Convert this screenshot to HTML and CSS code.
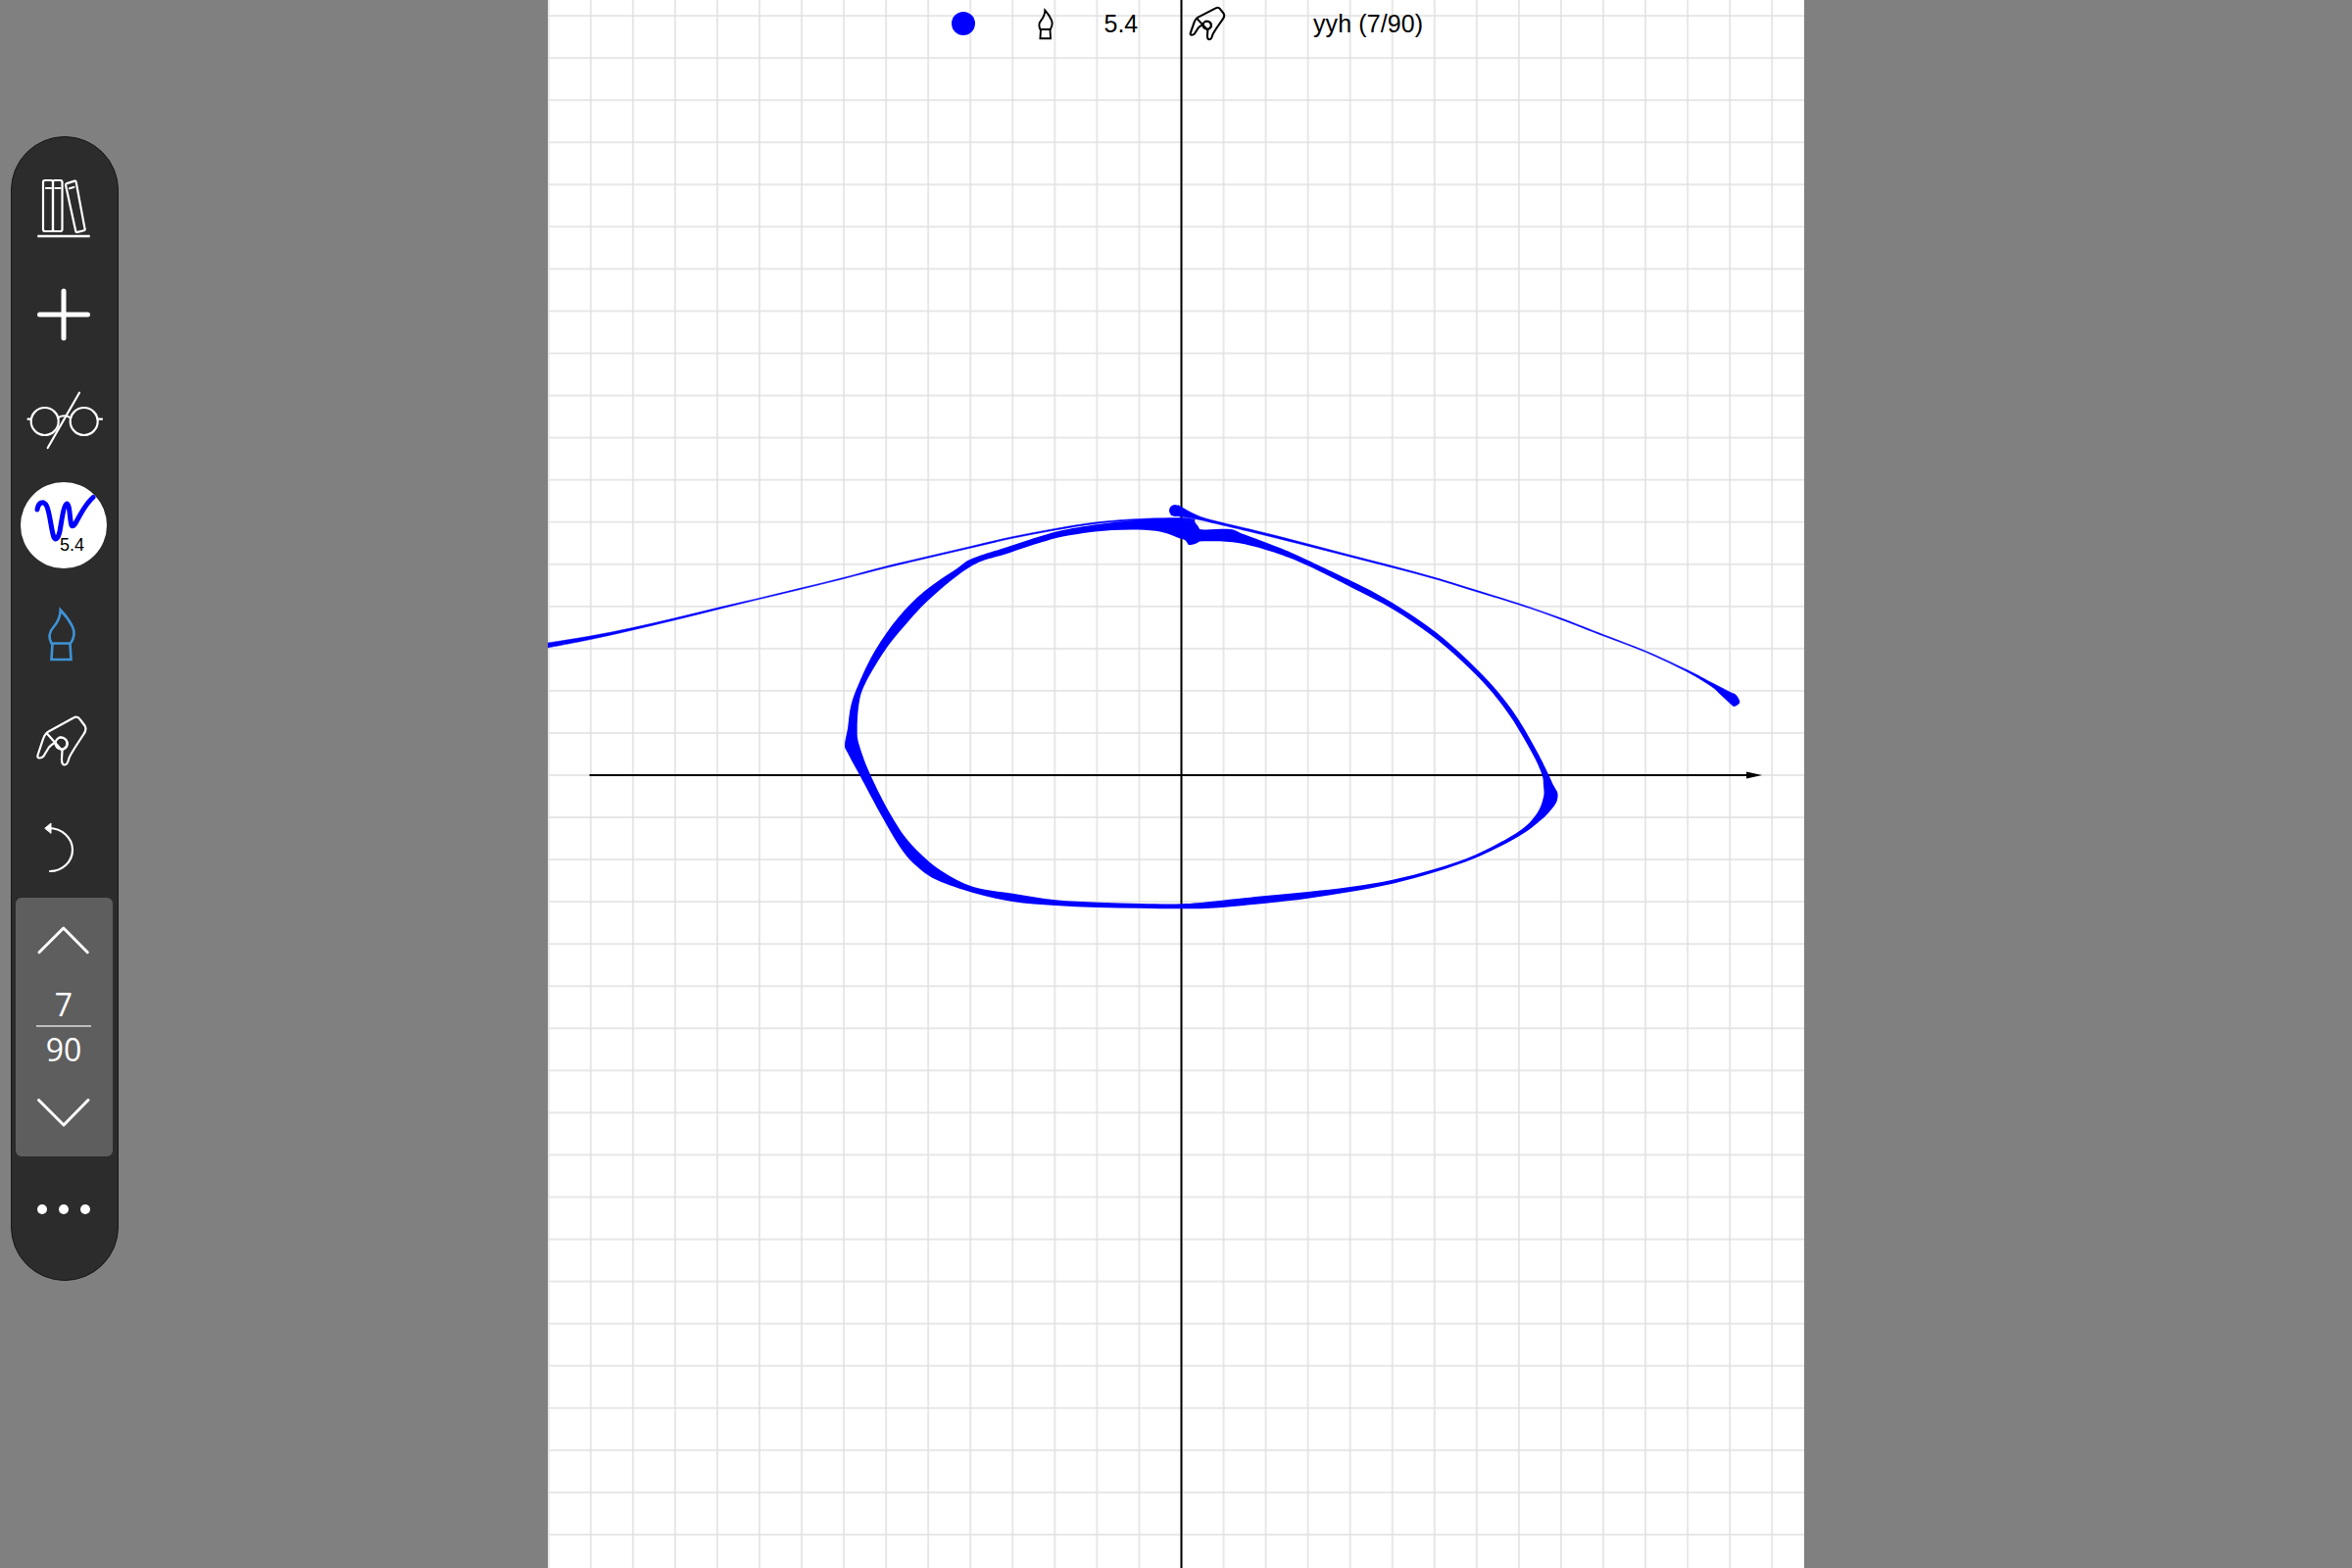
FILE: index.html
```html
<!DOCTYPE html>
<html lang="en">
  <head>
    <meta charset="UTF-8" />
    <title>yyh (7/90)</title>
    <link rel="stylesheet" href="styles.css">
  </head>
  <body>
    <svg class="defs" width="0" height="0">
      <symbol id="icon-nib" viewBox="46 618 34 58" preserveAspectRatio="none">
        <path d="M61.7 622.5C61.5 630 59 635 54.5 640C50 645 49 650 52.5 656.5H72C76.5 650 76.5 645 74 639.5C71.5 634.5 67 628 61.7 622.5Z" />
        <path d="M53.5 657L52.5 673H72.5L71.5 657" />
      </symbol>
      <symbol id="icon-hand" viewBox="36 729 54 54" preserveAspectRatio="none">
        <path d="M47.5 748C46 749.5 45 751 44 754L39 769C38 772 38 773.5 40 773.5C42 773.5 43 773.5 44.5 771.5L50 762.5C51.5 760.5 53 759.5 56.5 757.5M60 752.8C62 752 66 752.5 68 756C69.5 759 68.5 763 65 764.5M63.5 766L63 774C62.8 778.5 64 780.5 66 780.5C68.5 780.5 69.5 777.5 70.5 773.5C71.5 770.5 74 767 77 762L85.5 749C88 745.5 88 743 86.5 740.5L82 734.5C80 731.5 77.5 731 75 732.5L49.5 746.5C48.5 747 48 747.5 47.5 748Z" />
        <circle cx="62.5" cy="758.5" r="6" />
      </symbol>
    </svg>

    <aside class="toolbar">
      <div class="tool">
        <svg class="icon" viewBox="15 162 100 100">
          <rect x="44" y="184" width="10" height="52" rx="2" />
          <rect x="54" y="184" width="9.5" height="52" rx="2" />
          <path d="M47 192H52M56.5 192H61.5" />
          <path d="M67.7 187.4L76.2 184.6C76.9 184.4 77.5 184.8 77.6 185.5L86.6 233.6C86.8 234.4 86.3 235.1 85.6 235.3L79 236.9C78.2 237.1 77.5 236.7 77.3 235.9L67 188.7C66.9 188.1 67.2 187.6 67.7 187.4Z" />
          <path d="M71 192.3L75.3 191" />
          <path class="shelf" d="M38.3 241H91.7" />
        </svg>
      </div>
      <div class="tool">
        <svg class="icon" viewBox="15 270 100 100">
          <path class="plus" d="M40.5 321H89.5M65 297V345" />
        </svg>
      </div>
      <div class="tool">
        <svg class="icon" viewBox="15 378 100 100">
          <circle cx="45.7" cy="430" r="14" />
          <circle cx="85.7" cy="430" r="14" />
          <path d="M28.5 427.7H32M99.5 427.7H104M59 426.5C62 423.5 69 423.5 72 426.5M81 400.7L48.7 457" />
        </svg>
      </div>
      <div class="tool">
        <div class="pen-badge">
          <svg viewBox="21 493 88 88">
            <path class="squiggle" d="M38 521C39 514 44 511 47.5 517C51 524 52 541 55 549.5C57 553 59.5 550 61 543C63 532 65 516 68 515C71.5 514.5 71 532 73 537C75 540 78 533 82 526C86 519 90 513 95 508.5" />
          </svg>
          <span class="pen-size">5.4</span>
        </div>
      </div>
      <div class="tool">
        <svg class="icon icon-blue" viewBox="15 594 100 100">
          <path d="M61.7 622.5C61.5 630 59 635 54.5 640C50 645 49 650 52.5 656.5H72C76.5 650 76.5 645 74 639.5C71.5 634.5 67 628 61.7 622.5Z" />
          <path d="M53.5 657L52.5 673H72.5L71.5 657" />
        </svg>
      </div>
      <div class="tool">
        <svg class="icon" viewBox="15 702 100 100">
          <use href="#icon-hand" x="36" y="729" width="54" height="54" />
        </svg>
      </div>
      <div class="tool">
        <svg class="icon" viewBox="15 810 100 100">
          <path d="M51 889C64 889 74 879 74 867C74 855 63 845 50 845" />
          <path class="arrowhead" d="M46 845L52 840V850Z" />
        </svg>
      </div>

      <div class="pager">
        <svg class="chevron" viewBox="15 940 100 40">
          <path d="M40 971.7L64.8 947L89.3 971.7" />
        </svg>
        <div class="page-num">7</div>
        <div class="page-line"></div>
        <div class="page-num page-total">90</div>
        <svg class="chevron chevron-down" viewBox="15 1116 100 40">
          <path d="M39.5 1123.5L65 1149L90 1123.5" />
        </svg>
      </div>

      <div class="more">
        <span class="more-dot"></span>
        <span class="more-dot"></span>
        <span class="more-dot"></span>
      </div>
    </aside>

    <main class="paper">
      <svg class="canvas" viewBox="559 0 1282 1600">
        <defs>
          <pattern id="grid" x="1205.5" y="791" width="43.05" height="43.05" patternUnits="userSpaceOnUse">
            <path d="M0 0V43.05M0 0H43.05M43.05 0V43.05M0 43.05H43.05" class="grid-line" />
          </pattern>
        </defs>
        <rect x="559" y="0" width="1282" height="1600" fill="url(#grid)" />

        <path class="axis" d="M1205.5 0V1600M601.5 791H1784" />
        <path class="axis-tip" d="M1782 787.5L1798 791L1782 794.5Z" />

        <path id="ink-loop" class="ink" fill-rule="evenodd" />
        <path id="ink-knot" class="ink" />
        <path id="ink-left" class="ink ink-thin" />
        <circle class="ink" cx="1199" cy="521" r="6" />
        <path id="ink-right" class="ink ink-thin" />
      </svg>

      <div class="status">
        <span class="status-dot"></span>
        <svg class="status-nib"><use href="#icon-nib" /></svg>
        <span>5.4</span>
        <svg class="status-hand"><use href="#icon-hand" /></svg>
        <span class="status-name">yyh (7/90)</span>
      </div>
    </main>

    <script src="ink.js"></script>
  </body>
</html>
```

FILE: styles.css
```css
/* ------------ Page ------------ */
* {
  margin: 0;
  padding: 0;
  box-sizing: border-box;
}
body {
  width: 2400px;
  height: 1600px;
  overflow: hidden;
  display: flex;
  justify-content: center;
  background: #808080;
  font-family: "Liberation Sans", Arial, sans-serif;
  color: #000;
}
.defs {
  position: absolute;
}

/* ------------ Left toolbar ------------ */
.toolbar {
  position: absolute;
  left: 11px;
  top: 139px;
  width: 110px;
  height: 1168px;
  padding: 18px 4.5px 0 2.5px;
  display: flex;
  flex-direction: column;
  background: #2c2c2c;
  border: 1.5px solid #161616;
  border-radius: 55px;
}
.tool {
  height: 108px;
  flex: none;
  display: flex;
  align-items: center;
  justify-content: center;
}
.icon {
  width: 100px;
  height: 100px;
  fill: none;
  stroke: #fff;
  stroke-width: 2.2;
  stroke-linecap: round;
  stroke-linejoin: round;
}
.icon .plus {
  stroke-width: 5;
}
.icon .shelf {
  stroke-width: 2.6;
  stroke-linecap: butt;
}
.icon .arrowhead {
  fill: #fff;
  stroke-width: 1;
}
.icon-blue {
  stroke: #3e93d6;
  stroke-width: 2.6;
  stroke-linecap: butt;
  stroke-linejoin: miter;
}
.pen-badge {
  position: relative;
  width: 88px;
  height: 88px;
  border-radius: 50%;
  background: #fff;
}
.pen-badge svg {
  width: 88px;
  height: 88px;
  display: block;
}
.squiggle {
  fill: none;
  stroke: #0000ff;
  stroke-width: 5;
  stroke-linecap: round;
  stroke-linejoin: round;
}
.pen-size {
  position: absolute;
  left: 40px;
  top: 54px;
  font-size: 18px;
  line-height: 20px;
}

.pager {
  flex: none;
  height: 263.5px;
  margin: 2px 1px 0;
  padding-top: 24px;
  display: flex;
  flex-direction: column;
  align-items: center;
  background: #5e5e5e;
  border-radius: 6px;
}
.chevron {
  flex: none;
  width: 100px;
  height: 40px;
  fill: none;
  stroke: #fff;
  stroke-width: 3;
  stroke-linecap: round;
  stroke-linejoin: round;
}
.chevron-down {
  margin-top: 24px;
}
.page-num {
  margin-top: 25px;
  font-family: "Open Sans", sans-serif;
  font-size: 32px;
  line-height: 40px;
  color: #fff;
}
.page-line {
  margin-top: 1px;
  width: 56px;
  height: 2px;
  background: #bdbdbd;
}
.page-total {
  margin-top: 3px;
}
.more {
  margin-top: 49px;
  display: flex;
  justify-content: center;
  gap: 12px;
}
.more-dot {
  width: 10px;
  height: 10px;
  border-radius: 50%;
  background: #fff;
}

/* ------------ Paper ------------ */
.paper {
  position: relative;
  width: 1282px;
  height: 1600px;
  background: #fff;
}
.canvas {
  position: absolute;
  inset: 0;
  width: 1282px;
  height: 1600px;
}
.grid-line {
  fill: none;
  stroke: #e0e0e0;
  stroke-width: 1.5;
}
.axis {
  fill: none;
  stroke: #000;
  stroke-width: 2;
}
.axis-tip {
  fill: #000;
}
.ink {
  fill: #0000ff;
}
.ink-thin {
  stroke: #0000ff;
  stroke-width: 0.5;
}

.status {
  position: relative;
  height: 48px;
  padding-left: 412px;
  display: grid;
  grid-template-columns: 87px 68.5px 86.5px 127px auto;
  align-items: center;
  font-size: 25px;
  line-height: 48px;
}
.status-dot {
  width: 24px;
  height: 24px;
  border-radius: 50%;
  background: #0000ff;
}
.status-nib {
  width: 18px;
  height: 33px;
  fill: none;
  stroke: #000;
  stroke-width: 3.6;
}
.status-hand {
  width: 38px;
  height: 36px;
  fill: none;
  stroke: #000;
  stroke-width: 3;
  stroke-linecap: round;
  stroke-linejoin: round;
}
.status-name {
  letter-spacing: 0.1px;
}
```

FILE: ink.js
```js
// Pen strokes on the page, as edge points in page coordinates.
const loopOuter = [
  [1224, 540], [1255, 540], [1268.6, 545], [1304, 558.3], [1334.6, 571.7], [1393.6, 600],
  [1428.6, 620], [1465, 645], [1497, 673], [1526, 703], [1548, 732], [1568.3, 766.7],
  [1580, 790], [1585, 801], [1589, 808], [1589.5, 813], [1588, 819], [1583, 826], [1573.3, 836], [1550, 853.3],
  [1506.7, 875], [1464, 890], [1421, 901.7], [1377.7, 910], [1334.7, 916.7], [1291.7, 921.7],
  [1240, 926.4], [1205.7, 927.3], [1163.3, 926.7], [1120, 926], [1076.7, 924], [1033.3, 920],
  [993, 911], [956.7, 898.3], [936.7, 885], [920, 866.7], [900, 833.3], [876.7, 790],
  [865, 768.3], [862, 760], [865, 743.3], [868.3, 720], [876.7, 696.7], [893.3, 663.3],
  [916.7, 630], [943.3, 603.3], [976.7, 580], [991.8, 570], [1027.5, 558.3], [1063, 546.7],
  [1090, 540], [1134.6, 533.3], [1188, 529.3], [1217, 531.7],
];
const loopInner = [
  [1217, 552.3], [1241.8, 552.3], [1268.6, 555], [1304, 565], [1334.6, 577.3], [1380, 600],
  [1421, 621.5], [1459, 647], [1491, 674], [1520, 703.5], [1542.5, 733], [1563.3, 768.3],
  [1573.3, 790], [1575, 801.7], [1575, 813.3], [1568.3, 830], [1550, 848.3], [1506.7, 871.7],
  [1464, 886.7], [1421, 897.7], [1377.7, 905], [1334.7, 910], [1291.7, 914], [1240, 919.5],
  [1205.7, 922.3], [1163.3, 922], [1120, 920.7], [1076.7, 918.3], [1033.3, 911.7], [993.3, 905],
  [960, 888.3], [930, 861.7], [910, 833.3], [888.3, 791], [876.7, 760], [874.7, 743.3],
  [876.7, 716.7], [883.3, 696.7], [903.3, 663.3], [923.3, 638.3], [950, 610], [991.8, 577.3],
  [1027.5, 565], [1063, 553.3], [1090, 546.5], [1134.6, 541], [1179.3, 541.7], [1206, 550],
];
const knot = [
  [1197, 537], [1205, 531], [1217, 531.7], [1224, 540], [1224, 552], [1214, 556], [1210, 552],
];
const leftTop = [
  [559, 656], [602.3, 649], [645.3, 640.6], [688.3, 630.8], [731.7, 620.3], [774.3, 610.4],
  [817.3, 600.1], [860.3, 589.5], [904.7, 577.7], [947, 567.7], [990, 557.7], [1033, 547.7],
  [1076.6, 539.4], [1119.5, 532.8], [1162.8, 529.4], [1205.6, 528.5], [1219, 530],
];
const leftBottom = [
  [1219, 533], [1205.6, 530], [1162.8, 531], [1119.5, 534.2], [1076.6, 541], [1033, 549.3],
  [990, 559.3], [947, 569.3], [904.7, 579.3], [860.3, 590.7], [817.3, 601.3], [774.3, 611.6],
  [731.7, 622], [688.3, 632.8], [645.3, 643], [602.3, 652.6], [559, 661],
];
const rightTop = [
  [1202, 515.5], [1222, 526], [1241.8, 532], [1291.8, 544], [1334.6, 555], [1378, 566.4],
  [1421, 577.5], [1464, 589.3], [1507.4, 602.6], [1540, 612.7], [1560.7, 619.4], [1593.6, 631],
  [1636.4, 647.7], [1679.6, 664.4], [1722.5, 684], [1746.4, 696.5], [1765, 706], [1771.4, 709.3],
  [1775, 716.7], [1769.6, 720.7], [1766, 718.3],
];
const rightBottom = [
  [1753.6, 706.7], [1746.4, 700.5], [1722.5, 686], [1679.6, 665.6], [1636.4, 649], [1593.6, 632.4],
  [1560.7, 620.6], [1540, 613.9], [1507.4, 604], [1464, 590.7], [1421, 579.2], [1378, 568.2],
  [1334.6, 557.2], [1291.8, 546.5], [1241.8, 534.6], [1222, 530], [1198, 526],
];

// catmull-rom through the points, as cubic beziers
function curve(pts, closed) {
  const at = (i) => {
    if (closed) return pts[(i + pts.length) % pts.length];
    return pts[Math.min(Math.max(i, 0), pts.length - 1)];
  };
  const last = closed ? pts.length : pts.length - 1;
  let d = "";
  for (let i = 0; i < last; i++) {
    const [p0, p1, p2, p3] = [at(i - 1), at(i), at(i + 1), at(i + 2)];
    const c1 = [p1[0] + (p2[0] - p0[0]) / 6, p1[1] + (p2[1] - p0[1]) / 6];
    const c2 = [p2[0] - (p3[0] - p1[0]) / 6, p2[1] - (p3[1] - p1[1]) / 6];
    d += `C${c1[0]} ${c1[1]} ${c2[0]} ${c2[1]} ${p2[0]} ${p2[1]}`;
  }
  return d;
}
const ring = (pts) => `M${pts[0][0]} ${pts[0][1]}${curve(pts, true)}Z`;
const band = (top, bottom) =>
  `M${top[0][0]} ${top[0][1]}${curve(top)}L${bottom[0][0]} ${bottom[0][1]}${curve(bottom)}Z`;

document.getElementById("ink-loop").setAttribute("d", ring(loopOuter) + ring(loopInner));
document.getElementById("ink-knot").setAttribute("d", ring(knot));
document.getElementById("ink-left").setAttribute("d", band(leftTop, leftBottom));
document.getElementById("ink-right").setAttribute("d", band(rightTop, rightBottom));
```
